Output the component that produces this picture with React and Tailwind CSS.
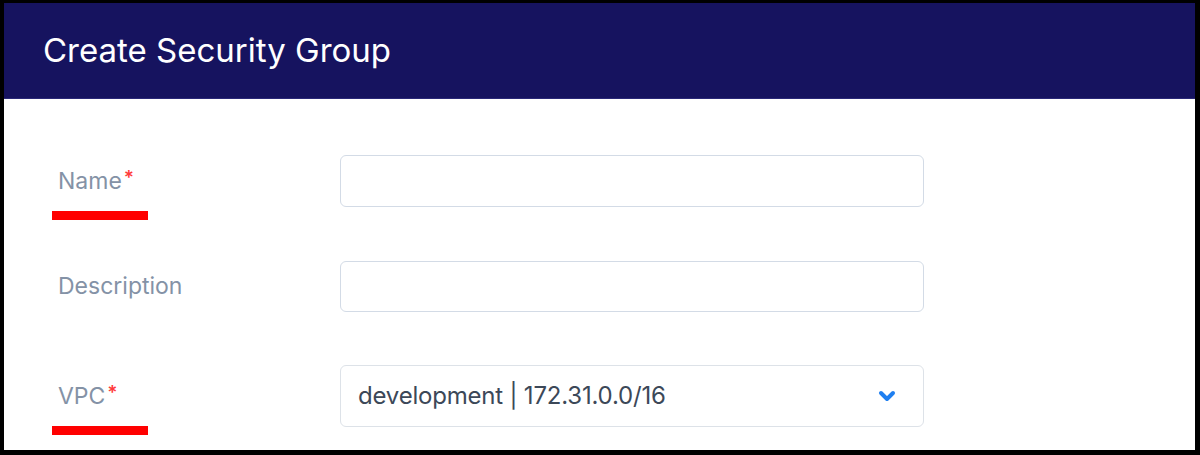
import React from "react";
import { ChevronDown } from "lucide-react";

const font = { fontFamily: "Inter, 'Noto Sans', sans-serif" };

function Label({ text, required, marked }) {
  return (
    <div className="relative w-[336px] shrink-0 pl-[54px]">
      <span className="text-[23px] text-[#8492a6]">
        {text}
        {required && <span className="ml-[2px] align-top text-[19px] font-semibold text-[#ff3b3b]">*</span>}
      </span>
      {marked && (
        <div className="absolute left-[48px] top-[47px] h-[9px] w-[96px] bg-[#ff0000]" />
      )}
    </div>
  );
}

export default function App() {
  return (
    <div className="h-[455px] w-[1200px] bg-black pt-[3px] pl-[4px] pr-[5px] pb-[5px]" style={font}>
      <div className="flex h-full flex-col overflow-hidden bg-white">
        <div className="flex h-[96px] items-center border-b border-[#2a2877] bg-[#16135f] pl-[39px]">
          <h1 className="text-[33px] font-normal text-white">Create Security Group</h1>
        </div>
        <div className="flex flex-col gap-[54px] pt-[56px]">
          <div className="flex items-center">
            <Label text="Name" required marked />
            <input className="h-[52px] w-[584px] rounded-[6px] border border-[#d3dbe6] outline-none" />
          </div>
          <div className="flex items-center">
            <Label text="Description" />
            <input className="h-[51px] w-[584px] rounded-[6px] border border-[#d3dbe6] outline-none" />
          </div>
          <div className="-mt-[1px] flex items-center">
            <Label text="VPC" required marked />
            <div className="flex h-[62px] w-[584px] items-center justify-between rounded-[6px] border border-[#dde2e8] pl-[17px] pr-[24px]">
              <span className="text-[24px] tracking-[-0.2px] text-[#3c4858]">development | 172.31.0.0/16</span>
              <ChevronDown size={24} strokeWidth={4} className="text-[#1f7ff0]" />
            </div>
          </div>
        </div>
      </div>
    </div>
  );
}
